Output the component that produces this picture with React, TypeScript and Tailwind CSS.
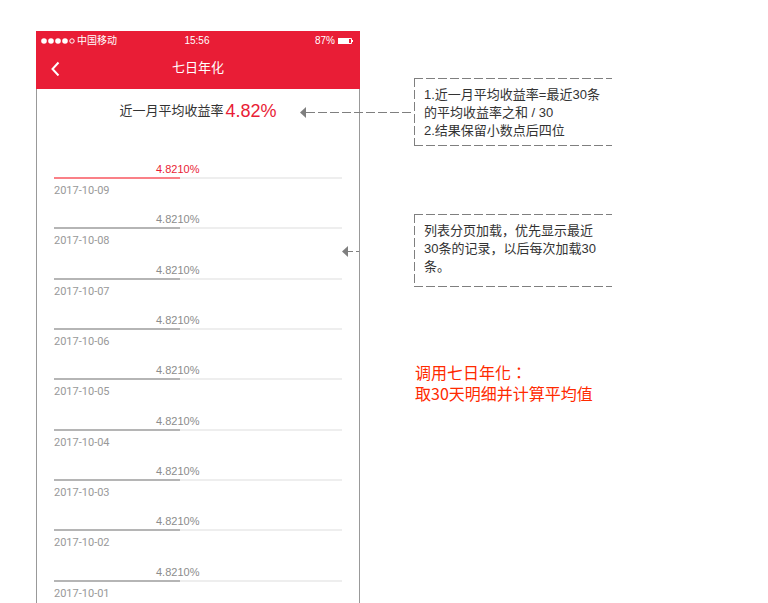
import React from "react";

const latin = "font-['Liberation_Sans','Noto_Sans_CJK_SC',sans-serif]";

const records = [
  { date: "2017-10-09", rate: "4.8210%" },
  { date: "2017-10-08", rate: "4.8210%" },
  { date: "2017-10-07", rate: "4.8210%" },
  { date: "2017-10-06", rate: "4.8210%" },
  { date: "2017-10-05", rate: "4.8210%" },
  { date: "2017-10-04", rate: "4.8210%" },
  { date: "2017-10-03", rate: "4.8210%" },
  { date: "2017-10-02", rate: "4.8210%" },
  { date: "2017-10-01", rate: "4.8210%" },
];

function StatusBar() {
  return (
    <div className="grid h-5 grid-cols-3 items-center pl-1 pr-1.5 text-[10px] leading-5">
      <div className="flex items-center gap-px whitespace-nowrap">
        <svg width="36" height="8" viewBox="0 0 36 8" fill="white" aria-hidden="true">
          <circle cx="4" cy="4" r="2.8" />
          <circle cx="11" cy="4" r="2.8" />
          <circle cx="18" cy="4" r="2.8" />
          <circle cx="25" cy="4" r="2.8" />
          <circle cx="32" cy="4" r="2.2" fill="none" stroke="white" />
        </svg>
        <span>中国移动</span>
      </div>
      <span className="text-center">15:56</span>
      <div className="flex items-center justify-end gap-0.5">
        <span>87%</span>
        <svg width="17" height="8" viewBox="0 0 17 8" aria-hidden="true">
          <rect x="1" y="1" width="11" height="6" fill="white" />
          <path d="M12 1.5h2.5v5H12" fill="none" stroke="white" />
          <path d="M15 3h1v2h-1z" fill="white" />
        </svg>
      </div>
    </div>
  );
}

function RecordRow({ date, rate, current }: { date: string; rate: string; current: boolean }) {
  return (
    <li className="flex flex-col">
      <span
        className={
          "pl-[102px] text-[11px] leading-4 " + (current ? "text-[#e91d36]" : "text-[#8c8c8c]")
        }
      >
        {rate}
      </span>
      <div className="h-0.5 bg-[#eeeeee]">
        <div className={"h-full w-[126px] " + (current ? "bg-[#fa8087]" : "bg-[#b5b5b5]")} />
      </div>
      <span className="pt-1 font-[Roboto,sans-serif] text-[11px] leading-4 text-[#999999]">
        {date}
      </span>
    </li>
  );
}

function Note({ height, lines }: { height: number; lines: string[] }) {
  return (
    <div className="relative w-[198px] whitespace-nowrap py-2 pl-2.5 text-[13px] leading-[18px] text-[#333333]">
      <svg
        className="absolute left-0 top-0"
        width="198"
        height={height}
        fill="none"
        stroke="#7f7f7f"
        strokeDasharray="9 3"
        aria-hidden="true"
      >
        <path d={`M0 0.5H198M0.5 0V${height}M0 ${height - 0.5}H198`} />
      </svg>
      {lines.map((line) => (
        <p key={line}>{line}</p>
      ))}
    </div>
  );
}

export default function App() {
  return (
    <div className={"flex h-screen items-start gap-[54px] overflow-hidden bg-white pl-9 pt-[31px] " + latin}>
      <main className="relative w-[324px] shrink-0">
        <header className="h-[58px] bg-[#e91d36] text-white">
          <StatusBar />
          <div className="grid h-[34px] grid-cols-[1fr_auto_1fr] items-center px-3">
            <button type="button" aria-label="返回" className="w-4">
              <svg width="16" height="16" viewBox="0 0 16 16" fill="none" stroke="white" strokeWidth="2" aria-hidden="true">
                <path d="M10.5 2.5 4.5 9l6 6.5" />
              </svg>
            </button>
            <h1 className="text-[13px] leading-5">七日年化</h1>
          </div>
        </header>
        <div className="border-x border-[#999999] px-[17px] pt-3">
          <p className="flex items-center justify-center gap-0.5 text-[13px] leading-5 text-[#333333]">
            近一月平均收益率
            <strong className="text-lg leading-5 font-normal text-[#e91d36]">4.82%</strong>
          </p>
          <ul className="mt-10 grid h-[453px] auto-rows-fr">
            {records.map((r, i) => (
              <RecordRow key={r.date} date={r.date} rate={r.rate} current={i === 0} />
            ))}
          </ul>
        </div>
        <svg className="absolute left-[264px] top-[75px]" width="114" height="12" aria-hidden="true">
          <path d="M0 6.5 6 1v11z" fill="#7f7f7f" />
          <path d="M6 6.5H114" stroke="#7f7f7f" strokeDasharray="9 3" />
        </svg>
        <svg className="absolute left-[306px] top-[214px]" width="17" height="12" aria-hidden="true">
          <path d="M0 6.5 6 1v11z" fill="#7f7f7f" />
          <path d="M6 6.5H17" stroke="#7f7f7f" strokeDasharray="5 3" />
        </svg>
      </main>
      <aside className="pt-[47px]">
        <Note
          height={68}
          lines={["1.近一月平均收益率=最近30条", "的平均收益率之和 / 30", "2.结果保留小数点后四位"]}
        />
        <div className="mt-[66px]">
          <Note
            height={73}
            lines={["列表分页加载，优先显示最近", "30条的记录，以后每次加载30", "条。"]}
          />
        </div>
        <div
          lang="zh-TW"
          className="mt-[78px] pl-px font-['Noto_Sans_CJK_TC','Noto_Sans_CJK_SC',sans-serif] text-base leading-[21px] text-[#ff2a00]"
        >
          <p>调用七日年化：</p>
          <p>取30天明细并计算平均值</p>
        </div>
      </aside>
    </div>
  );
}
